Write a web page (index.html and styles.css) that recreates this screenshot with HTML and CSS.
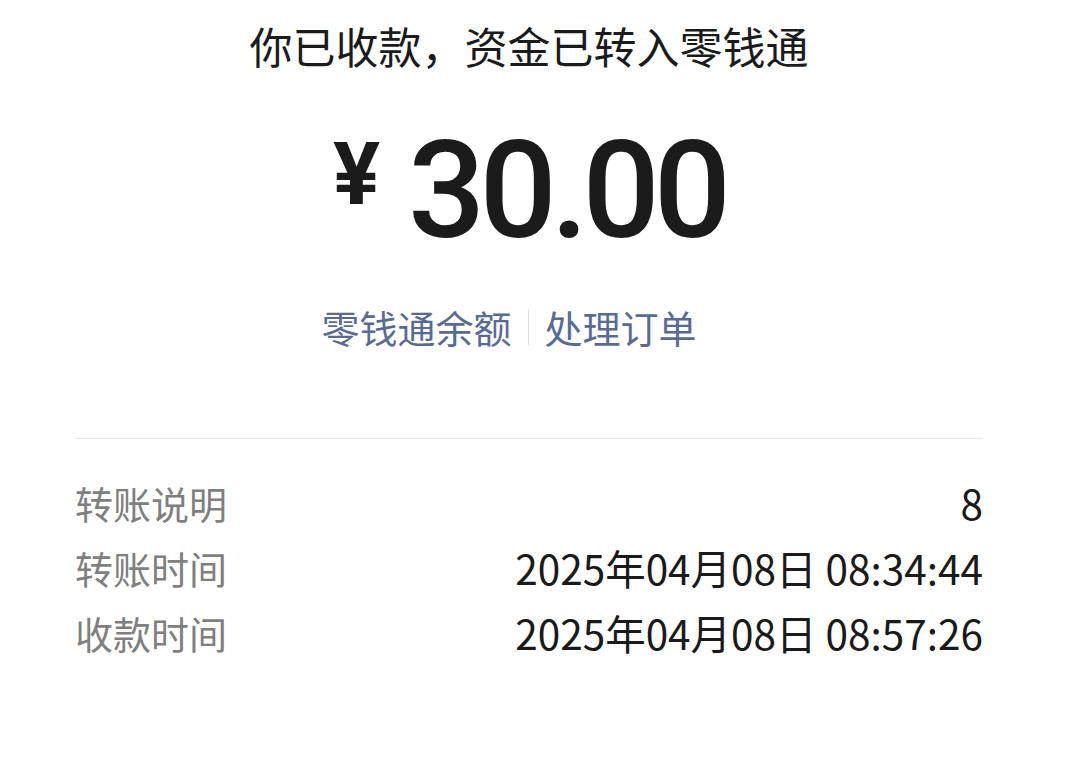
FILE: index.html
```html
<!DOCTYPE html>
<html lang="zh-CN">
<head>
<meta charset="utf-8">
<link rel="stylesheet" href="styles.css">
</head>
<body>
<div class="page">
  <div class="title">你已收款，资金已转入零钱通</div>
  <div class="amount"><span class="yen">¥</span><span class="num">30.00</span></div>
  <div class="links">
    <span class="link">零钱通余额</span>
    <span class="sep"></span>
    <span class="link">处理订单</span>
  </div>
  <div class="divider"></div>
  <div class="rows">
    <div class="row"><span class="label">转账说明</span><span class="value">8</span></div>
    <div class="row"><span class="label">转账时间</span><span class="value">2025年04月08日 08:34:44</span></div>
    <div class="row"><span class="label">收款时间</span><span class="value">2025年04月08日 08:57:26</span></div>
  </div>
</div>
</body>
</html>
```
FILE: styles.css
```css
html, body {
  margin: 0;
  padding: 0;
  background: #ffffff;
}
body {
  font-family: "Noto Sans CJK SC", "Noto Sans", sans-serif;
  color: #1a1a1a;
  width: 1069px;
  height: 770px;
  overflow: hidden;
}
.page {
  padding: 15px 86px 0 75px;
}
.title {
  text-align: center;
  font-size: 43px;
  line-height: 60px;
  color: #1b1b1b;
}
.amount {
  display: flex;
  justify-content: center;
  align-items: flex-start;
  margin-top: 41px;
  height: 150px;
  color: #1b1b1b;
}
.yen {
  font-family: Roboto, "Noto Sans", sans-serif;
  font-weight: 700;
  font-size: 88px;
  line-height: 100px;
  margin-top: 8px;
  margin-right: 28px;
}
.num {
  font-family: Roboto, "Noto Sans", sans-serif;
  font-weight: 500;
  font-size: 136px;
  line-height: 150px;
  letter-spacing: -6px;
}
.links {
  display: flex;
  justify-content: center;
  align-items: center;
  margin-top: 36px;
  margin-right: 40px;
  color: #576b95;
  font-size: 38px;
  line-height: 50px;
}
.sep {
  width: 1px;
  height: 36px;
  background: #e0e0e0;
  margin: 0 16px;
}
.divider {
  height: 1px;
  background: #e8e8e8;
  margin-top: 86px;
}
.rows {
  padding-top: 31px;
}
.row {
  display: flex;
  justify-content: space-between;
  align-items: center;
  height: 65px;
}
.label {
  color: #7f7f7f;
  font-size: 38px;
}
.value {
  color: #1a1a1a;
  font-size: 40.5px;
}
```
